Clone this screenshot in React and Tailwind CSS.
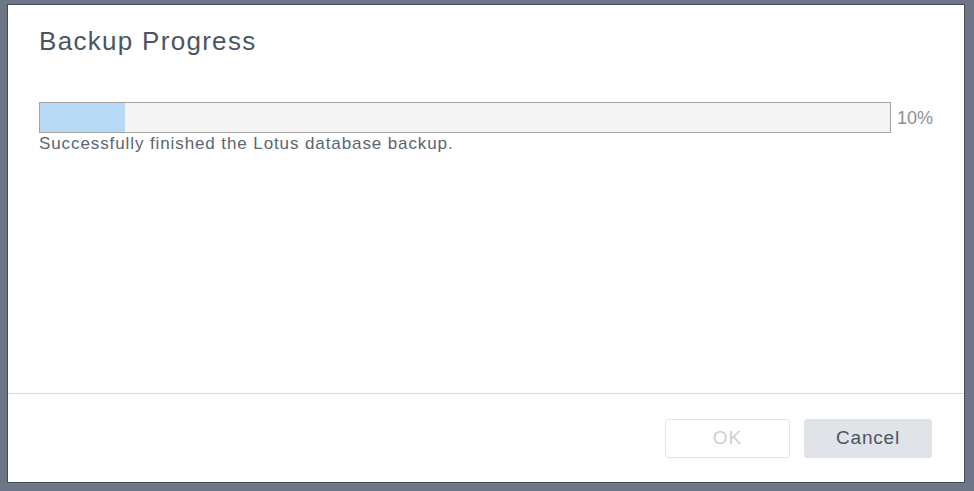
export default function App() {
  return (
    <div className="w-[974px] h-[491px] bg-[#6c7686] pt-[5px] pl-[8px] overflow-hidden" style={{ fontFamily: '"Liberation Sans", Arial, sans-serif' }}>
      <div className="w-[956px] h-[477px] bg-white flex flex-col outline outline-1 outline-[#444a54]">
        <div className="flex-1 px-[31px] pt-[20px]">
          <h1 className="text-[26px] leading-[32px] tracking-[1.3px] text-[#4a5564]">Backup Progress</h1>
          <div className="mt-[45px] flex items-center">
            <div className="w-[852px] h-[31px] border border-[#a3a3a3] bg-[#f4f4f4] flex">
              <div className="w-[85px] h-full bg-[#b8d9f6]" />
            </div>
            <span className="ml-[6px] text-[18px] leading-[20px] text-[#8c9096]">10%</span>
          </div>
          <p className="mt-[1px] text-[17px] leading-[20px] tracking-[0.9px] text-[#5a6574]">Successfully finished the Lotus database backup.</p>
        </div>
        <div className="h-[1px] bg-[#d4d8dc]" />
        <div className="h-[88px] flex justify-end items-start pt-[25px] pr-[32px] gap-[14px]">
          <button className="w-[125px] h-[39px] rounded-[3px] border border-[#e2e6ea] bg-white text-[19px] tracking-[1px] text-[#cbd0d6]">OK</button>
          <button className="w-[128px] h-[39px] rounded-[3px] bg-[#e0e3e8] text-[19px] tracking-[0.8px] text-[#4a5564]">Cancel</button>
        </div>
      </div>
    </div>
  );
}
